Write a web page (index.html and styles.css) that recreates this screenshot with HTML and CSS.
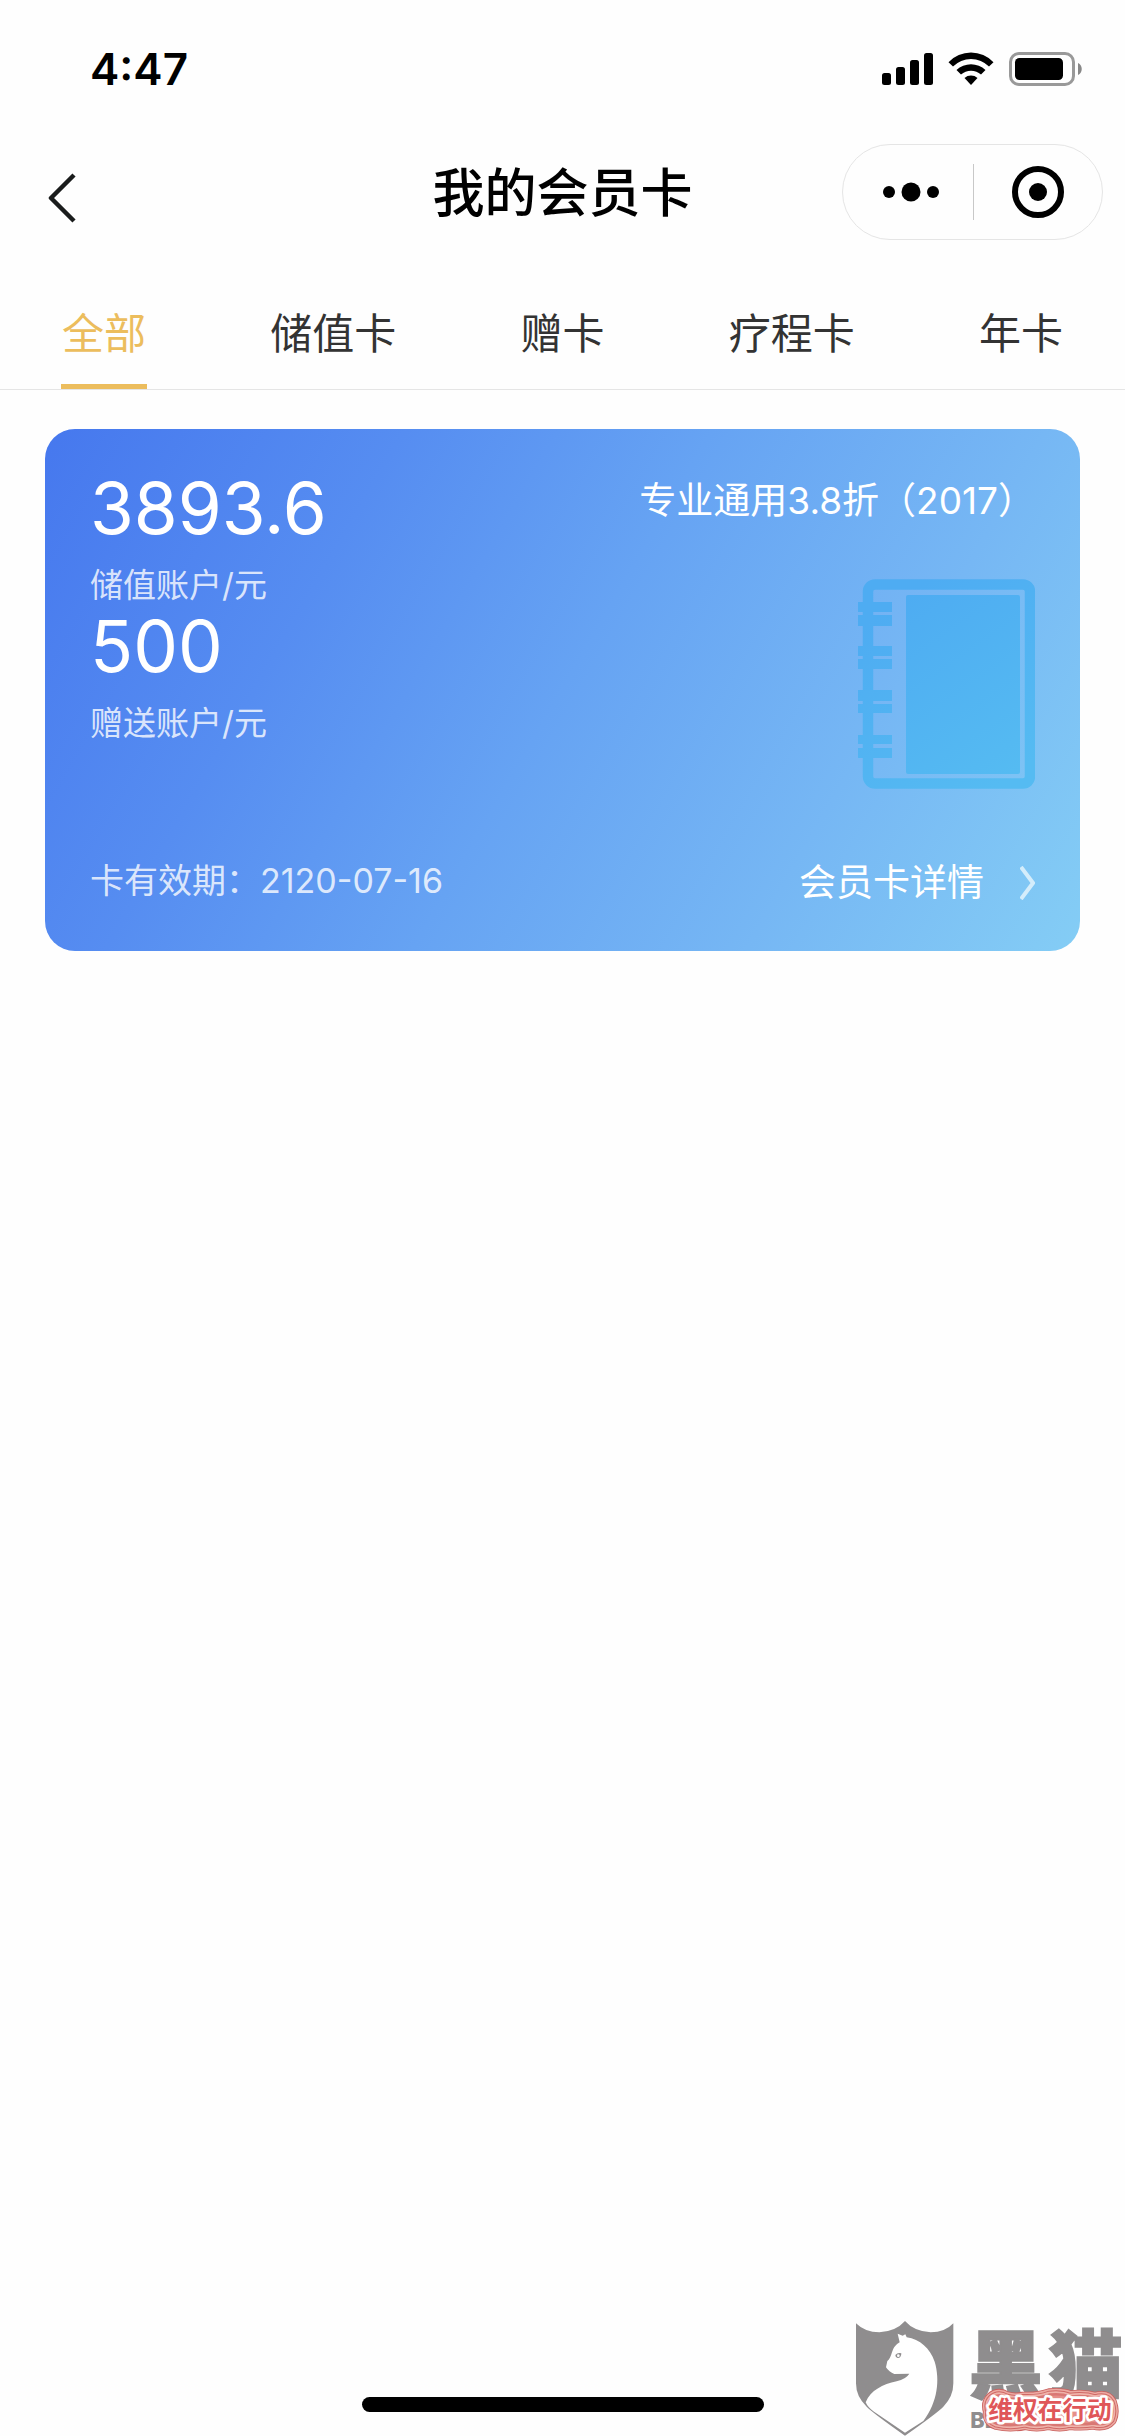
FILE: index.html
```html
<!DOCTYPE html>
<html lang="zh-CN">
<head>
<meta charset="utf-8">
<meta name="viewport" content="width=device-width, initial-scale=1">
<title>我的会员卡</title>
<link rel="stylesheet" href="styles.css">
</head>
<body>
<div class="page">
  <div class="status">
    <span class="time">4:47</span>
    <svg class="status-icons" viewBox="0 0 200 34" aria-hidden="true">
      <rect x="0" y="21" width="9" height="12" rx="2.5"/>
      <rect x="14" y="15" width="9" height="18" rx="2.5"/>
      <rect x="28" y="8" width="9" height="25" rx="2.5"/>
      <rect x="42" y="1" width="9" height="32" rx="2.5"/>
      <path d="M66.500 10.200A31 31 0 0 1 111.500 10.200L107 14.500A25.500 25.500 0 0 0 71 14.500Z"/>
      <path d="M74.500 18A21 21 0 0 1 103.500 18L99 22.500A15 15 0 0 0 79 22.500Z"/>
      <path d="M82.500 26A10 10 0 0 1 95.500 26L89 33Z"/>
      <rect x="128.500" y="1.500" width="63" height="31" rx="8.500" fill="none" stroke="#999" stroke-width="3"/>
      <rect x="133" y="6" width="48" height="22" rx="4.500"/>
      <path d="M196 11c5 2 5 10 0 12z" fill="#888"/>
    </svg>
  </div>

  <header class="nav">
    <button class="back" type="button" aria-label="返回">
      <svg viewBox="0 0 28 50" aria-hidden="true"><path d="M26 2 3 25 26 48" fill="none" stroke="#1a1c1c" stroke-width="4.500" stroke-linejoin="round"/></svg>
    </button>
    <h1 class="title">我的会员卡</h1>
    <div class="capsule">
      <button class="capsule-btn" type="button" aria-label="更多">
        <svg class="more" viewBox="0 0 56 20" aria-hidden="true"><circle cx="6" cy="10" r="6"/><circle cx="28" cy="10" r="9.500"/><circle cx="50" cy="10" r="6"/></svg>
      </button>
      <button class="capsule-btn" type="button" aria-label="关闭">
        <svg class="target" viewBox="0 0 52 52" aria-hidden="true"><circle cx="26" cy="26" r="23" fill="none" stroke="#000" stroke-width="6"/><circle cx="26" cy="26" r="9"/></svg>
      </button>
    </div>
  </header>

  <nav class="tabs">
    <button class="tab active" type="button">全部</button>
    <button class="tab" type="button">储值卡</button>
    <button class="tab" type="button">赠卡</button>
    <button class="tab" type="button">疗程卡</button>
    <button class="tab" type="button">年卡</button>
  </nav>

  <main class="content">
    <article class="card">
      <div class="card-top">
        <div class="accounts">
          <div class="amount">3893.6</div>
          <div class="label">储值账户/元</div>
          <div class="amount">500</div>
          <div class="label">赠送账户/元</div>
        </div>
        <div class="card-side">
          <h2 class="card-name">专业通用3.8折（2017）</h2>
          <svg class="book" viewBox="0 0 177 210" aria-hidden="true">
            <defs>
              <linearGradient id="book" gradientUnits="userSpaceOnUse" x1="30" y1="30" x2="150" y2="200">
                <stop offset="0" stop-color="#4eacf2"/><stop offset="1" stop-color="#55bbf2"/>
              </linearGradient>
            </defs>
            <rect x="10" y="5.500" width="162" height="199" rx="7" fill="none" stroke="url(#book)" stroke-width="10.500"/>
            <g fill="url(#book)">
              <rect x="48" y="16" width="114" height="179" rx="2"/>
              <path d="M0 23h34v10H0zM0 36h34v11H0zM0 67h34v10H0zM0 80h34v10H0zM0 111h34v11H0zM0 125h34v9H0zM0 156h34v9H0zM0 169h34v10H0z"/>
            </g>
          </svg>
        </div>
      </div>
      <div class="card-foot">
        <span class="validity">卡有效期：2120-07-16</span>
        <a class="details" href="#details">会员卡详情
          <svg class="chevron" viewBox="0 0 15 34" aria-hidden="true"><path d="M1 1 13 17 1 33" fill="none" stroke="#d4edfb" stroke-width="4"/></svg>
        </a>
      </div>
    </article>
  </main>

  <div class="home-bar"></div>

  <svg class="watermark" viewBox="0 0 855 408" role="img" aria-label="黑猫 维权在行动">
    <path fill="#8f8d8e" d="M48 70Q75 97 118 97Q168 94 195 63Q222 94 272 97Q315 97 340 70V250Q340 290 310 320Q290 340 195 407Q100 340 80 320Q48 290 48 250Z"/>
    <path fill="#fff" d="M173 101 188 107 196 103 200 112C240 118 270 145 284 185C300 238 294 305 250 363L195 398L100 334Q83 321 77 307C92 271 128 253 170 244Q198 237 208 221L163 222Q147 216 138 202L142 183C155 173 154 155 163 141Q169 132 179 127Z"/>
    <path fill="#8f8d8e" d="M166 165Q173 157 184 160Q184 174 173 174Q166 173 166 165Z"/>
    <circle cx="175" cy="167" r="4" fill="#fff"/>
    <g class="wm-name"><text x="386" y="276">黑</text><text x="626" y="276">猫</text></g>
    <text class="wm-latin" x="391" y="385">BLACK CAT</text>
    <defs>
      <path id="cloud" d="M455 295Q475 278 500 293Q525 300 550 294Q595 296 628 284Q665 280 690 290Q735 285 765 295Q800 285 812 308Q822 335 812 358Q795 378 760 370Q725 375 690 371Q660 380 625 371Q590 380 555 371Q510 380 470 371Q442 360 448 335Q440 310 455 295Z"/>
    </defs>
    <g stroke-linejoin="round">
      <use href="#cloud" fill="none" stroke="#c9605e" stroke-width="38"/>
      <use href="#cloud" fill="none" stroke="#ecaaa2" stroke-width="33"/>
      <use href="#cloud" fill="none" stroke="#cf6966" stroke-width="24"/>
      <use href="#cloud" fill="none" stroke="#efb3aa" stroke-width="18"/>
      <use href="#cloud" fill="#e58f8a" stroke="#d97874" stroke-width="8"/>
    </g>
    <text class="wm-slogan" x="445" y="358">维权在行动</text>
  </svg>
</div>
</body>
</html>
```
FILE: styles.css
```css
* { box-sizing: border-box; margin: 0; padding: 0; }

body {
  background: #fefefe;
  color: #333;
  font-family: Inter, "Noto Sans CJK SC", sans-serif;
}

button {
  border: 0;
  background: none;
  color: inherit;
  font: inherit;
}

svg { display: block; }

.page {
  position: relative;
  display: flex;
  flex-direction: column;
  min-height: 100vh;
}

.status {
  display: flex;
  align-items: center;
  justify-content: space-between;
  height: 138px;
  padding: 0 43px 0 90px;
  color: #000;
}
.time { font-size: 44px; font-weight: 600; }
.status-icons { width: 200px; height: 34px; }

.nav {
  display: grid;
  grid-template-columns: 1fr auto 1fr;
  align-items: center;
  height: 108px;
  padding: 0 22px;
  color: #000;
}
.back { justify-self: start; padding: 12px 0 0 26px; }
.back svg { width: 28px; height: 50px; }
.title { padding-top: 4px; font-size: 52px; font-weight: 500; line-height: 72px; }
.capsule {
  justify-self: end;
  display: flex;
  align-items: center;
  width: 261px;
  height: 96px;
  border: 1px solid #e5e5e5;
  border-radius: 48px;
}
.capsule-btn {
  display: flex;
  align-items: center;
  justify-content: center;
  width: 50%;
  height: 56px;
}
.capsule-btn:first-child { padding-left: 6px; }
.capsule-btn + .capsule-btn { border-left: 1px solid #c8c8c8; }
.more { width: 56px; height: 20px; }
.target { width: 52px; height: 52px; }

.tabs {
  display: flex;
  justify-content: space-between;
  padding: 0 61px;
  border-bottom: 1px solid #e5e5e5;
}
.tab {
  padding: 57px 1px 19px;
  border-bottom: 5px solid transparent;
  font-size: 42px;
  line-height: 62px;
}
.tab.active { border-color: #ecbd5d; color: #ecbd5d; }

.content { flex: 1; padding: 39px 45px; }

.card {
  padding: 37px 45px 43px;
  border-radius: 30px;
  background: linear-gradient(120deg, #4678ee 0%, #568df1 27%, #66a3f3 50%, #76b7f4 75%, #84cdf5 100%);
  color: #fff;
}
.card-top, .card-foot { display: flex; justify-content: space-between; }
.amount { font-size: 71px; line-height: 84px; }
.label {
  padding-top: 16px;
  font-size: 33px;
  line-height: 38px;
}
.label, .validity { color: rgba(255, 255, 255, .8); }
.card-side { display: flex; flex-direction: column; align-items: flex-end; }
.card-name { font-size: 37px; font-weight: 400; line-height: 70px; }
.book { width: 177px; height: 210px; margin-top: 43px; }
.card-foot { margin-top: 67px; line-height: 50px; }
.validity { font-size: 34px; }
.details {
  display: flex;
  align-items: center;
  gap: 36px;
  padding-top: 2px;
  color: #fff;
  font-size: 37px;
  text-decoration: none;
}
.chevron { width: 15px; height: 34px; }

.home-bar {
  align-self: center;
  width: 402px;
  height: 15px;
  margin: 0 0 24px;
  border-radius: 8px;
  background: #000;
}

.watermark {
  position: absolute;
  right: 0;
  bottom: 0;
  width: 285px;
  height: 136px;
}
.wm-name {
  fill: #8f8d8e;
  stroke: #8f8d8e;
  stroke-width: 5px;
  font: 900 222px "Noto Sans CJK SC", sans-serif;
}
.wm-latin { fill: #8f8d8e; font: 800 65px Inter, sans-serif; }
.wm-slogan {
  fill: #e05658;
  stroke: #fff;
  stroke-width: 16px;
  stroke-linejoin: round;
  paint-order: stroke;
  font: 700 74px "Noto Sans CJK SC", sans-serif;
}
```
